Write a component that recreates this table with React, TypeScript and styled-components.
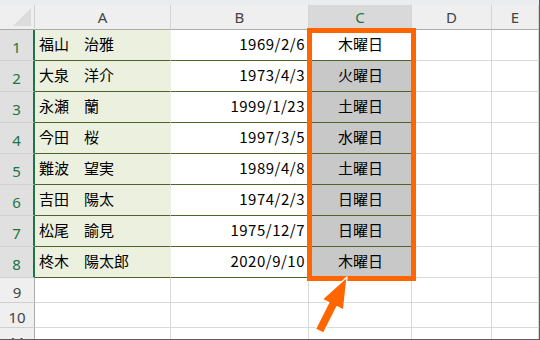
import React from "react";
import styled, { createGlobalStyle, css } from "styled-components";

const Global = createGlobalStyle`
  html, body { margin: 0; padding: 0; background: #ffffff; }
  * { box-sizing: border-box; }
`;

const CJK = `"Noto Sans CJK JP", "Noto Sans", sans-serif`;

const Frame = styled.div`
  position: relative;
  width: 540px;
  height: 340px;
  overflow: hidden;
  background: #ffffff;
  border-right: 1px solid #5c5c5c;
  border-bottom: 1px solid #5c5c5c;
`;

const TopStrip = styled.div`
  height: 5px;
  background: #e9edf0;
`;

const Sheet = styled.div`
  display: grid;
  grid-template-columns: 35px 136px 138px 103px 80px 1fr;
  grid-template-rows: 25px repeat(8, 31px) repeat(3, 25px);
`;

const Corner = styled.div`
  position: relative;
  background: #efefef;
  border-right: 1px solid #d0d0d0;
  border-bottom: 1px solid #ababab;
`;

const CornerMark = styled.svg`
  position: absolute;
  right: 3px;
  bottom: 3px;
`;

const ColHead = styled.div<{ $active?: boolean }>`
  display: flex;
  align-items: center;
  justify-content: center;
  font-family: "Noto Sans", "Liberation Sans", sans-serif;
  font-size: 15px;
  color: #444444;
  background: #efefef;
  border-right: 1px solid #d4d4d4;
  border-bottom: 1px solid #ababab;
  ${(p) =>
    p.$active &&
    css`
      background: #d9d9d9;
      color: #217346;
      border-bottom: 2px solid #217346;
    `}
`;

const RowHead = styled.div<{ $active?: boolean }>`
  display: flex;
  align-items: center;
  justify-content: center;
  padding-top: 3px;
  font-family: "Noto Sans", "Liberation Sans", sans-serif;
  font-size: 15px;
  color: #444444;
  background: #efefef;
  border-bottom: 1px solid #d0d0d0;
  border-right: 1px solid #ababab;
  ${(p) =>
    p.$active &&
    css`
      background: #e0e0e0;
      color: #217346;
      border-right: 2px solid #217346;
    `}
`;

type Tone = "name" | "plain" | "picked" | "sel";

const Cell = styled.div<{ $tone?: Tone; $align?: "left" | "right" | "center"; $data?: boolean; $wide?: boolean }>`
  display: flex;
  align-items: center;
  padding: 0 3px 3px 4px;
  font-family: ${CJK};
  font-size: 15px;
  color: #000000;
  white-space: pre;
  letter-spacing: ${(p) => (p.$wide ? "0.5px" : "0")};
  justify-content: ${(p) =>
    p.$align === "right" ? "flex-end" : p.$align === "center" ? "center" : "flex-start"};
  background: ${(p) =>
    p.$tone === "name" ? "#ebf1de" : p.$tone === "picked" ? "#c8c8c8" : "#ffffff"};
  border-right: 1px solid ${(p) => (p.$data ? "transparent" : "#d9d9d9")};
  border-bottom: 1px solid ${(p) => (p.$data ? "#4f6228" : "#d9d9d9")};
`;

const Highlight = styled.div`
  position: absolute;
  left: 307px;
  top: 28px;
  width: 109px;
  height: 253px;
  border: 5px solid #ff6600;
`;

const Pointer = styled.svg`
  position: absolute;
  left: 300px;
  top: 268px;
`;

const rows = [
  { name: "福山　治雅", date: "1969/2/6", day: "木曜日" },
  { name: "大泉　洋介", date: "1973/4/3", day: "火曜日" },
  { name: "永瀬　蘭", date: "1999/1/23", day: "土曜日" },
  { name: "今田　桜", date: "1997/3/5", day: "水曜日" },
  { name: "難波　望実", date: "1989/4/8", day: "土曜日" },
  { name: "吉田　陽太", date: "1974/2/3", day: "日曜日" },
  { name: "松尾　諭見", date: "1975/12/7", day: "日曜日" },
  { name: "柊木　陽太郎", date: "2020/9/10", day: "木曜日" },
];

const columns = ["A", "B", "C", "D", "E"];

export default function App() {
  return (
    <>
      <Global />
      <Frame>
        <TopStrip />
        <Sheet>
          <Corner>
            <CornerMark width="18" height="18" viewBox="0 0 18 18">
              <polygon points="18,0 18,18 0,18" fill="#dcdcdc" />
            </CornerMark>
          </Corner>
          {columns.map((c) => (
            <ColHead key={c} $active={c === "C"}>
              {c}
            </ColHead>
          ))}

          {rows.map((r, i) => (
            <React.Fragment key={i}>
              <RowHead $active>{i + 1}</RowHead>
              <Cell $tone="name" $data>
                {r.name}
              </Cell>
              <Cell $align="right" $data $wide>
                {r.date}
              </Cell>
              <Cell $align="center" $tone={i === 0 ? "sel" : "picked"} $data>
                {r.day}
              </Cell>
              <Cell />
              <Cell />
            </React.Fragment>
          ))}

          {[9, 10, 11].map((n) => (
            <React.Fragment key={n}>
              <RowHead>{n}</RowHead>
              <Cell />
              <Cell />
              <Cell />
              <Cell />
              <Cell />
            </React.Fragment>
          ))}
        </Sheet>

        <Highlight />

        <Pointer width="56" height="72" viewBox="300 268 56 72">
          <polygon
            points="347,277 343.5,310 336.9,306.6 323.5,333 315.5,329 328.9,302.6 322.3,299.4"
            fill="#ff6600"
            stroke="#ffffff"
            strokeWidth="1.2"
            strokeLinejoin="round"
          />
        </Pointer>
      </Frame>
    </>
  );
}
